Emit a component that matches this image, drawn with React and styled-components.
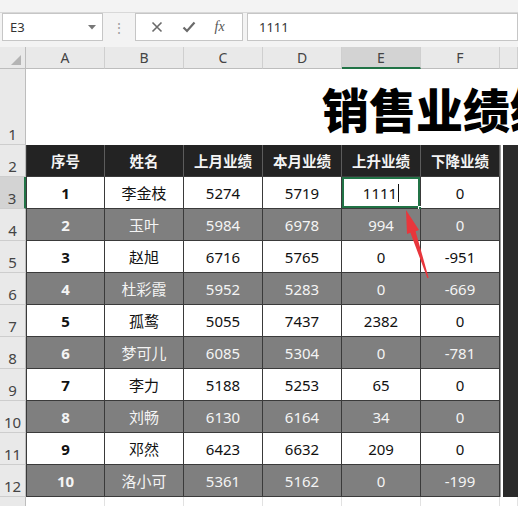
import React from 'react'
import styled, { createGlobalStyle } from 'styled-components'

const GlobalStyle = createGlobalStyle`
  * { box-sizing: border-box; }
  html, body {
    margin: 0;
    padding: 0;
    overflow: hidden;
    background: #f3f3f3;
    font-family: 'Noto Sans', 'Noto Sans CJK SC', sans-serif;
  }
`

const Page = styled.div`
  position: relative;
  width: 518px;
  height: 506px;
  overflow: hidden;
`

const TopStrip = styled.div`
  height: 13px;
  border-bottom: 1px solid #d8d8d8;
`

const FormulaRow = styled.div`
  display: flex;
  align-items: stretch;
  height: 28px;
  padding-left: 2px;
  margin-bottom: 6px;
`

const Box = styled.div`
  display: flex;
  align-items: center;
  width: ${p => p.width}px;
  background: #ffffff;
  border: 1px solid #c6c6c6;
  color: #333;
  font-size: 13px;
  padding: 0 ${p => p.pad || 0}px;
`

const NameBox = styled(Box)`
  justify-content: space-between;
  padding: 0 6px 0 7px;
`

const Dots = styled.div`
  width: 32px;
  display: flex;
  align-items: center;
  justify-content: center;
  color: #a0a0a0;
  font-size: 14px;
`

const FnButtons = styled(Box)`
  justify-content: space-around;
  padding: 0 8px 0 6px;
  margin-right: 4px;
`

const Fx = styled.span`
  font-family: 'Liberation Serif', serif;
  font-style: italic;
  font-size: 14px;
  color: #555;
`

const Grid = styled.div`
  display: grid;
  grid-template-columns: 26px repeat(6, 79px) 1fr;
  background: #ffffff;
`

const ColHead = styled.div`
  height: 22px;
  display: flex;
  align-items: center;
  justify-content: center;
  font-size: 14px;
  color: #444;
  background: ${p => (p.active ? '#d3d3d3' : '#e9e9e9')};
  border-right: 1px solid #cfcfcf;
  border-bottom: ${p => (p.active ? '2px solid #217346' : '1px solid #bdbdbd')};
`

const Corner = styled.div`
  height: 22px;
  display: flex;
  align-items: flex-end;
  justify-content: flex-end;
  padding: 0 4px 3px 0;
  background: #e9e9e9;
  border-right: 1px solid #bdbdbd;
  border-bottom: 1px solid #bdbdbd;
`

const RowHead = styled.div`
  height: ${p => p.h}px;
  display: flex;
  align-items: flex-end;
  justify-content: center;
  overflow: hidden;
  font-size: 15px;
  line-height: 20px;
  color: #444;
  background: ${p => (p.active ? '#d3d3d3' : '#e9e9e9')};
  border-right: ${p => (p.active ? '2px solid #217346' : '1px solid #bdbdbd')};
  border-bottom: 1px solid #cdcdcd;
`

const TitleCell = styled.div`
  grid-column: 2 / 9;
  height: 76px;
  display: flex;
  align-items: center;
  padding-left: 296px;
  overflow: hidden;
  white-space: nowrap;
  font-family: 'Noto Sans CJK SC', sans-serif;
  font-weight: 900;
  font-size: 47px;
  color: #000;
  background: #fff;
`

const Cell = styled.div`
  position: relative;
  height: 32px;
  display: flex;
  align-items: center;
  justify-content: center;
  font-family: 'Noto Sans', 'Noto Sans CJK SC', sans-serif;
  font-size: 15px;
  font-weight: ${p => (p.bold ? 700 : 400)};
  color: ${p => (p.tone === 'head' || p.tone === 'gray' ? '#f4f4f4' : '#111')};
  background: ${p =>
    p.tone === 'head' ? '#232323' : p.tone === 'gray' ? '#7f7f7f' : '#ffffff'};
  border-right: 1px solid ${p => (p.tone === 'head' ? '#5c5c5c' : '#3a3a3a')};
  border-bottom: 1px solid #3a3a3a;
  border-left: ${p => (p.first ? '1px solid #3a3a3a' : 'none')};
  box-shadow: ${p => (p.selected ? 'inset 0 0 0 2px #217346' : 'none')};
`

const HeadText = styled.span`
  font-family: 'Noto Sans CJK SC', sans-serif;
  font-weight: 700;
  font-size: 14.5px;
`

const Caret = styled.span`
  display: inline-block;
  width: 1px;
  height: 18px;
  margin-left: 1px;
  background: #111;
`

const FillHandle = styled.span`
  position: absolute;
  right: -4px;
  bottom: -4px;
  width: 6px;
  height: 6px;
  background: #217346;
  border: 1px solid #fff;
`

const Side = styled.div`
  grid-row: span 11;
  background: #ffffff;
  padding-left: 2px;
  border-left: 1px solid #9a9a9a;
`

const SidePanel = styled.div`
  height: 100%;
  background: #2a2a2a;
`

const Blank = styled.div`
  height: ${p => p.h}px;
  background: #fff;
  border-right: 1px solid #e2e2e2;
`

const Arrow = styled.svg`
  position: absolute;
  left: 0;
  top: 0;
  pointer-events: none;
`

const headers = ['序号', '姓名', '上月业绩', '本月业绩', '上升业绩', '下降业绩']

const rows = [
  [1, '李金枝', 5274, 5719, 1111, 0],
  [2, '玉叶', 5984, 6978, 994, 0],
  [3, '赵旭', 6716, 5765, 0, -951],
  [4, '杜彩霞', 5952, 5283, 0, -669],
  [5, '孤鹜', 5055, 7437, 2382, 0],
  [6, '梦可儿', 6085, 5304, 0, -781],
  [7, '李力', 5188, 5253, 65, 0],
  [8, '刘畅', 6130, 6164, 34, 0],
  [9, '邓然', 6423, 6632, 209, 0],
  [10, '洛小可', 5361, 5162, 0, -199],
]

const App = () => {
  return (
    <Page>
      <GlobalStyle />
      <TopStrip />
      <FormulaRow>
        <NameBox width={101}>
          <span>E3</span>
          <svg width="8" height="5" viewBox="0 0 8 5">
            <path d="M0 0 L8 0 L4 4.5 Z" fill="#777" />
          </svg>
        </NameBox>
        <Dots>⋮</Dots>
        <FnButtons width={108}>
          <svg width="12" height="12" viewBox="0 0 12 12">
            <path d="M1.5 1.5 L10.5 10.5 M10.5 1.5 L1.5 10.5" stroke="#6a6a6a" strokeWidth="1.6" />
          </svg>
          <svg width="14" height="12" viewBox="0 0 14 12">
            <path d="M1.5 6.5 L5 10 L12.5 1.5" stroke="#6a6a6a" strokeWidth="2.2" fill="none" />
          </svg>
          <Fx>fx</Fx>
        </FnButtons>
        <Box width={271} pad={11}>1111</Box>
      </FormulaRow>

      <Grid>
        <Corner>
          <svg width="10" height="10" viewBox="0 0 10 10">
            <path d="M10 0 L10 10 L0 10 Z" fill="#b4b4b4" />
          </svg>
        </Corner>
        {['A', 'B', 'C', 'D', 'E', 'F'].map(l => (
          <ColHead key={l} active={l === 'E'}>{l}</ColHead>
        ))}
        <ColHead />

        <RowHead h={76}>1</RowHead>
        <TitleCell>销售业绩统计表</TitleCell>

        <RowHead h={32}>2</RowHead>
        {headers.map((h, i) => (
          <Cell key={h} tone="head" first={i === 0}>
            <HeadText>{h}</HeadText>
          </Cell>
        ))}
        <Side>
          <SidePanel />
        </Side>

        {rows.map((r, ri) => {
          const tone = ri % 2 === 1 ? 'gray' : 'white'
          return (
            <React.Fragment key={r[0]}>
              <RowHead h={32} active={ri === 0}>{ri + 3}</RowHead>
              {r.map((v, ci) => {
                const selected = ri === 0 && ci === 4
                return (
                  <Cell key={ci} tone={tone} bold={ci === 0} first={ci === 0} selected={selected}>
                    {v}
                    {selected && <Caret />}
                    {selected && <FillHandle />}
                  </Cell>
                )
              })}
            </React.Fragment>
          )
        })}

        <RowHead h={12} />
        {[0, 1, 2, 3, 4, 5, 6].map(i => (
          <Blank key={i} h={12} />
        ))}
      </Grid>

      <Arrow width="518" height="506" viewBox="0 0 518 506">
        <polygon
          points="406,210 419,230 415.6,231.2 428.6,277.8 427.4,278.2 410.4,232.8 407,234"
          fill="#e8363c"
        />
      </Arrow>
    </Page>
  )
}

export default App
